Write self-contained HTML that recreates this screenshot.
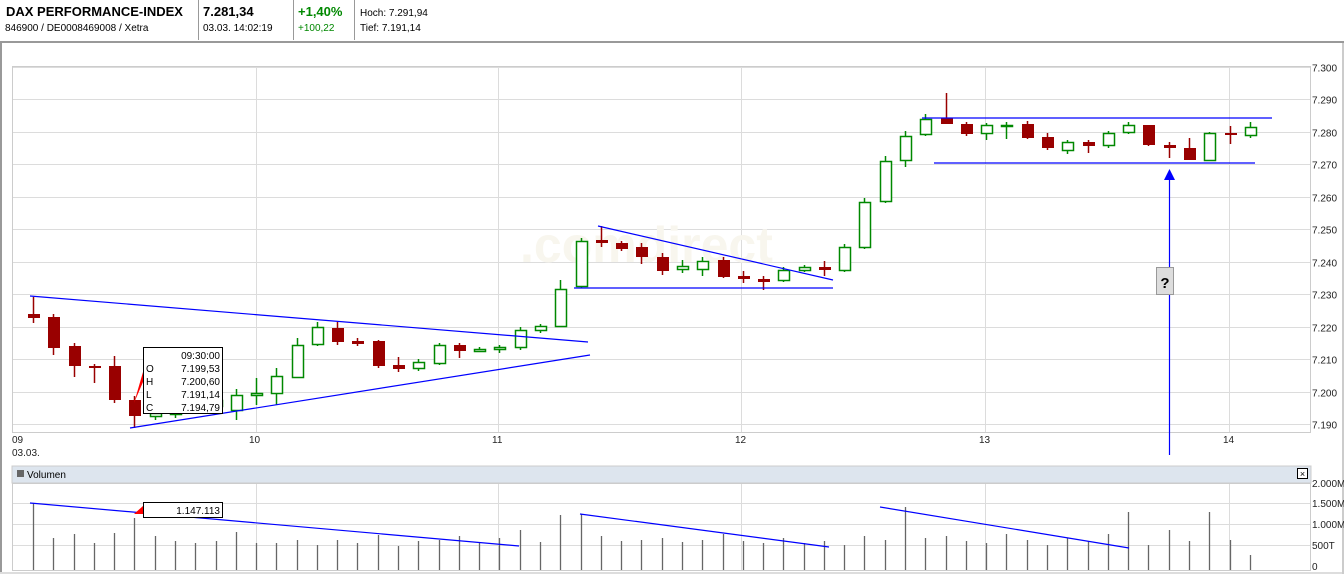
<!DOCTYPE html>
<html><head><meta charset="utf-8"><style>
body{margin:0;width:1344px;height:574px;overflow:hidden;background:#fff;font-family:"Liberation Sans",Arial,sans-serif}
svg{position:absolute;left:0;top:0}
</style></head><body>
<svg id="s" width="1344" height="574" xmlns="http://www.w3.org/2000/svg" font-family="Liberation Sans, Arial, sans-serif">
<rect x="0" y="0" width="1344" height="41" fill="#fff"/>
<text x="6" y="16" font-size="13" font-weight="bold">DAX PERFORMANCE-INDEX</text>
<text x="5" y="31" font-size="10">846900 / DE0008469008 / Xetra</text>
<line x1="198.5" y1="0" x2="198.5" y2="40" stroke="#999"/>
<text x="203" y="16" font-size="13" font-weight="bold">7.281,34</text>
<text x="203" y="31" font-size="10">03.03. 14:02:19</text>
<line x1="293.5" y1="0" x2="293.5" y2="40" stroke="#999"/>
<text x="298" y="16" font-size="13" font-weight="bold" fill="#008800">+1,40%</text>
<text x="298" y="31" font-size="10" fill="#008800">+100,22</text>
<line x1="354.5" y1="0" x2="354.5" y2="40" stroke="#999"/>
<text x="360" y="16" font-size="10">Hoch: 7.291,94</text>
<text x="360" y="31" font-size="10">Tief: 7.191,14</text>
<rect x="0" y="41" width="1344" height="2" fill="#999"/>
<rect x="0" y="43" width="2" height="531" fill="#999"/>
<rect x="0" y="572" width="1344" height="2" fill="#ddd"/>
<rect x="1342" y="43" width="2" height="531" fill="#ccc"/>
<g id="grid" stroke="#dcdcdc" stroke-width="1"></g>
<text x="520" y="262" font-size="50" font-weight="bold" fill="#f8f6ee">.comdirect</text>
<rect x="12.5" y="66.5" width="1298" height="366" fill="none" stroke="#ccc"/>
<g id="c"></g>
<g stroke="#0000ff" stroke-width="1.2" fill="none">
<line x1="30" y1="296" x2="588" y2="342"/>
<line x1="130" y1="428" x2="590" y2="355"/>
<line x1="598" y1="226" x2="833" y2="280"/>
<line x1="574" y1="288" x2="833" y2="288"/>
<line x1="922" y1="118" x2="1272" y2="118"/>
<line x1="934" y1="163" x2="1255" y2="163"/>
<line x1="1169.5" y1="178" x2="1169.5" y2="455"/>
<line x1="30" y1="503" x2="519" y2="546"/>
<line x1="580" y1="514" x2="829" y2="547"/>
<line x1="880" y1="507" x2="1129" y2="548"/>
</g>
<polygon points="1169.5,169 1164,180 1175,180" fill="#0000ff"/>
<rect x="1156.5" y="267.5" width="17" height="27" fill="#ddd" stroke="#999"/>
<text x="1165" y="288" font-size="15" font-weight="bold" text-anchor="middle">?</text>
<polygon points="134,403 143,372 143,382" fill="#f00"/>
<rect x="143.5" y="347.5" width="79" height="66" fill="#fff" stroke="#000"/>
<g font-size="10"><text x="220" y="359" text-anchor="end">09:30:00</text>
<text x="146" y="372">O</text><text x="220" y="372" text-anchor="end">7.199,53</text>
<text x="146" y="385">H</text><text x="220" y="385" text-anchor="end">7.200,60</text>
<text x="146" y="398">L</text><text x="220" y="398" text-anchor="end">7.191,14</text>
<text x="146" y="411">C</text><text x="220" y="411" text-anchor="end">7.194,79</text></g>
<g font-size="10" fill="#222"><text x="12" y="443">09</text><text x="12" y="456">03.03.</text>
<text x="249" y="443">10</text><text x="492" y="443">11</text><text x="735" y="443">12</text><text x="979" y="443">13</text><text x="1223" y="443">14</text></g>
<g id="yl" font-size="10" fill="#222"></g>
<rect x="12" y="466" width="1299" height="17" fill="#dde5ee" stroke="#ccc"/>
<rect x="17" y="470" width="7" height="7" fill="#666"/>
<text x="27" y="478" font-size="10">Volumen</text>
<rect x="1297.5" y="468.5" width="10" height="10" fill="#fff" stroke="#000"/>
<text x="1302.5" y="477" font-size="9" text-anchor="middle">×</text>
<rect x="12.5" y="483.5" width="1298" height="87" fill="none" stroke="#ccc"/>
<g font-size="10" fill="#222"><text x="1312" y="487">2.000M</text><text x="1312" y="507">1.500M</text><text x="1312" y="528">1.000M</text><text x="1312" y="549">500T</text><text x="1312" y="570">0</text></g>
<polygon points="134,514 143,506 143,514" fill="#f00"/>
<rect x="143.5" y="502.5" width="79" height="15" fill="#fff" stroke="#000"/>
<text x="220" y="514" font-size="10" text-anchor="end">1.147.113</text>
</svg>
<script>
var s='http://www.w3.org/2000/svg';
function el(p,t,a){var e=document.createElementNS(s,t);for(var k in a)e.setAttribute(k,a[k]);p.appendChild(e);return e;}
var g=document.getElementById('grid'),yl=document.getElementById('yl'),c=document.getElementById('c');
var labs=['7.300','7.290','7.280','7.270','7.260','7.250','7.240','7.230','7.220','7.210','7.200','7.190'];
for(var i=0;i<12;i++){var y=66.5+i*32.5;y=Math.round(y)+.5;el(g,'line',{x1:12,y1:y,x2:1310,y2:y});var t=el(yl,'text',{x:1312,y:y+4});t.textContent=labs[i];}
[256,498,741,985,1229].forEach(function(x){el(g,'line',{x1:x+.5,y1:67,x2:x+.5,y2:432});el(g,'line',{x1:x+.5,y1:483,x2:x+.5,y2:571});});
[503,524,545].forEach(function(y){el(g,'line',{x1:12,y1:y+.5,x2:1310,y2:y+.5});});
var d=[['r',314,318,297,323],['r',317,348,314,355],['r',346,366,343,377],['r',366,368,364,383],['r',366,400,356,403],['r',400,416,396,428],
['g',413,416,410,420],['g',408,414,404,418],['g',404,410,400,414],['g',400,406,396,410],['g',395,410,389,420],['g',393,395,378,405],['g',376,393,368,405],['g',345,377,338,378],['g',327,344,322,346],['r',328,342,322,345],['r',341,344,338,346],['r',341,366,340,368],['r',365,369,357,372],['g',362,368,359,371],['g',345,363,343,365],['r',345,351,343,358],['g',349,351,347,352],['g',347,349,345,353],['g',330,347,327,350],['g',326,330,324,333],['g',289,326,280,327],['g',241,286,238,288],['r',240,243,226,247],['r',243,249,241,251],['r',247,257,243,264],['r',257,271,253,275],['g',266,269,260,273],['g',261,269,257,276],['r',260,277,257,278],['r',276,279,271,283],['r',279,282,276,290],['g',270,280,267,282],['g',267,270,265,272],['r',267,270,261,276],['g',247,270,244,272],['g',202,247,198,249],['g',161,201,156,203],['g',136,160,131,167],['g',119,134,114,136],['r',118,124,93,124],['r',124,134,122,136],['g',125,133,123,140],['g',125,126,122,139],['r',124,138,121,139],['r',137,148,133,150],['g',142,150,140,154],['r',142,146,140,153],['g',133,145,131,148],['g',125,132,122,134],['r',125,145,125,146],['r',145,148,142,158],['r',148,160,138,160],['g',133,160,132,160],['r',133,134,126,144],['g',127,135,122,138]];
var vol=[503,538,534,543,533,518,536,541,543,541,532,543,543,540,545,540,543,535,546,541,540,536,543,538,530,542,515,514,536,541,540,538,542,540,534,541,543,538,543,541,545,536,540,507,538,536,541,543,534,540,545,538,541,534,512,545,530,541,512,540,555];
for(var i=0;i<d.length;i++){var x=Math.round(33+20.28*i),q=d[i],col=q[0]=='r'?'#990000':'#008800';
el(c,'line',{x1:x+.5,y1:q[3],x2:x+.5,y2:q[4],stroke:col,'stroke-width':1.5});
if(q[0]=='r')el(c,'rect',{x:x-5,y:q[1],width:12,height:Math.max(2,q[2]-q[1]),fill:col});
else el(c,'rect',{x:x-4.5,y:q[1]+.5,width:11,height:Math.max(1,q[2]-q[1]),fill:'#fff',stroke:col,'stroke-width':1.5});
el(c,'line',{x1:x+.5,y1:vol[i],x2:x+.5,y2:571,stroke:'#666','stroke-width':1.3});}
</script>
</body></html>
